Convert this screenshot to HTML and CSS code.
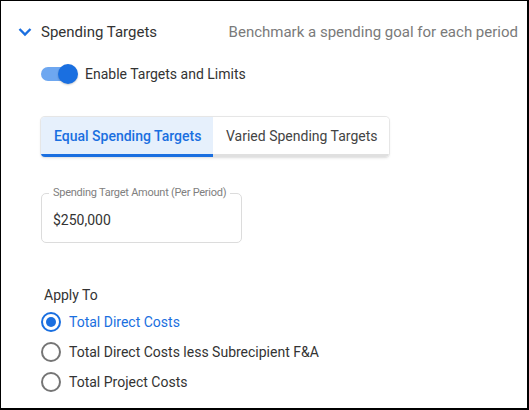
FILE: index.html
```html
<!DOCTYPE html>
<html>
<head>
<meta charset="utf-8">
<link rel="stylesheet" href="styles.css">
</head>
<body>
<div class="frame">
  <div class="header">
    <svg class="chevron" width="14" height="10" viewBox="0 0 14 10"><path d="M1.5 2 L7 7.5 L12.5 2" fill="none" stroke="#1a6fe0" stroke-width="2.4"/></svg>
    <span class="title">Spending Targets</span>
    <span class="hint">Benchmark a spending goal for each period</span>
  </div>
  <div class="body">
    <div class="toggle-row">
      <span class="toggle"><span class="track"></span><span class="thumb"></span></span>
      <span class="toggle-label">Enable Targets and Limits</span>
    </div>
    <div class="tabs">
      <div class="tab active">Equal Spending Targets</div>
      <div class="tab">Varied Spending Targets</div>
    </div>
    <div class="field">
      <span class="field-label">Spending Target Amount (Per Period)</span>
      <span class="field-value">$250,000</span>
    </div>
    <div class="apply-title">Apply To</div>
    <div class="radios">
      <div class="radio-row checked"><span class="radio"><span class="dot"></span></span><span class="radio-label">Total Direct Costs</span></div>
      <div class="radio-row"><span class="radio"></span><span class="radio-label">Total Direct Costs less Subrecipient F&amp;A</span></div>
      <div class="radio-row"><span class="radio"></span><span class="radio-label">Total Project Costs</span></div>
    </div>
  </div>
</div>
</body>
</html>
```
FILE: styles.css
```css
html, body { margin: 0; padding: 0; background: #fff; }
body { font-family: Roboto, "Noto Sans", sans-serif; color: #333; }
.frame {
  box-sizing: border-box;
  width: 529px; height: 410px;
  border-top: 1px solid #000; border-left: 1px solid #000;
  border-right: 2px solid #000; border-bottom: 2px solid #000;
  overflow: hidden;
}
.header {
  display: flex; align-items: center;
  height: 30px; margin-top: 16px;
  padding-left: 17px; padding-right: 9px;
}
.chevron { margin-right: 9px; }
.title { font-size: 15px; color: #333; }
.hint { margin-left: auto; font-size: 15px; color: #7a7a7a; }
.body { padding-left: 40px; }
.toggle-row { display: flex; align-items: center; margin-top: 15px; height: 24px; }
.toggle { position: relative; width: 37px; height: 22px; margin-right: 7px; }
.track { position: absolute; left: 0; top: 4px; width: 34px; height: 14px; border-radius: 7px; background: #6ea7f0; }
.thumb { position: absolute; right: 0; top: 1px; width: 20px; height: 20px; border-radius: 50%; background: #1a6fe0; box-shadow: 0 1px 2px rgba(0,0,0,0.2); }
.toggle-label { font-size: 14px; color: #333; }
.tabs {
  display: flex; width: fit-content; margin-top: 31px; height: 40px;
  border-radius: 4px; overflow: hidden;
  box-shadow: 0 0 0 1px #e6e6e6, 0 1px 3px rgba(0,0,0,0.12);
}
.tab {
  display: flex; align-items: center; box-sizing: border-box; white-space: nowrap;
  font-size: 14px; padding: 0 12px 0 13px; color: #444;
  border-bottom: 3px solid #e0e0e0; background: #fff;
}
.tab.active { background: #e6f0fc; color: #1a6fe0; font-weight: 500; border-bottom-color: #1a6fe0; width: 172px; }
.field {
  position: relative; box-sizing: border-box;
  width: 201px; height: 50px; margin-top: 36px;
  border: 1px solid #dcdcdc; border-radius: 5px;
  display: flex; align-items: center; padding-left: 11px; padding-top: 3px;
}
.field-label {
  position: absolute; left: 7px; top: -8px;
  background: #fff; padding: 0 4px;
  font-size: 11px; letter-spacing: -0.25px; color: #808080; line-height: 14px;
  white-space: nowrap;
}
.field-value { font-size: 14px; color: #333; }
.apply-title { margin-top: 43px; margin-left: 3px; font-size: 14px; color: #333; line-height: 18px; }
.radios { margin-top: 7px; display: flex; flex-direction: column; gap: 8px; }
.radio-row { display: flex; align-items: center; height: 22px; }
.radio {
  box-sizing: border-box; width: 20px; height: 20px; border-radius: 50%;
  border: 2px solid #757575; margin-right: 8px; margin-left: 0px;
  display: flex; align-items: center; justify-content: center;
}
.radio-label { font-size: 14px; color: #333; }
.checked .radio { border-color: #1a6fe0; }
.checked .dot { width: 10px; height: 10px; border-radius: 50%; background: #1a6fe0; }
.checked .radio-label { color: #1a6fe0; }
```
